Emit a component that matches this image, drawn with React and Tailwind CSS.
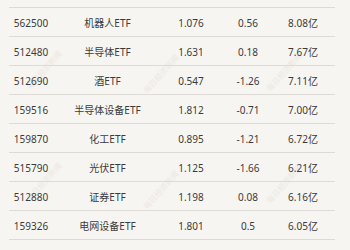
import React from 'react';

const ROWS = [
  ['562500', '机器人ETF', '1.076', '0.56', '8.08亿'],
  ['512480', '半导体ETF', '1.631', '0.18', '7.67亿'],
  ['512690', '酒ETF', '0.547', '-1.26', '7.11亿'],
  ['159516', '半导体设备ETF', '1.812', '-0.71', '7.00亿'],
  ['159870', '化工ETF', '0.895', '-1.21', '6.72亿'],
  ['515790', '光伏ETF', '1.125', '-1.66', '6.21亿'],
  ['512880', '证券ETF', '1.198', '0.08', '6.16亿'],
  ['159326', '电网设备ETF', '1.801', '0.5', '6.05亿'],
];

/* faint diagonal watermark marks, centre points */
const MARKS = [
  [44, 70],
  [161, 74],
  [284, 72],
  [44, 182],
  [161, 190],
  [284, 184],
];

export default function App() {
  return (
    <div
      className="relative w-[350px] h-[250px] overflow-hidden bg-[#f7f5f1] pt-[7px] pl-[9px]"
      style={{ fontFamily: "'Noto Sans', 'Noto Sans CJK SC', sans-serif" }}
    >
      {/* watermark, sits under the table */}
      {MARKS.map(([x, y], i) => (
        <span
          key={i}
          className="absolute text-[8px] font-bold leading-none text-[#efebe6] whitespace-nowrap -translate-x-1/2 -translate-y-1/2 -rotate-[48deg] pointer-events-none select-none"
          style={{ left: x, top: y }}
        >
          每日经济新闻
        </span>
      ))}

      <div className="relative z-10 w-[326px] border-t border-[#dedad5]">
        {ROWS.map((r) => (
          <div
            key={r[0]}
            className="grid grid-cols-[44px_109px_58px_56px_54px] h-[29px] items-center border-b border-[#dedad5] text-[10px] leading-none text-[#3b3b3b] text-center pt-[2px]"
          >
            <span>{r[0]}</span>
            <span>{r[1]}</span>
            <span>{r[2]}</span>
            <span>{r[3]}</span>
            <span>{r[4]}</span>
          </div>
        ))}
      </div>
    </div>
  );
}
